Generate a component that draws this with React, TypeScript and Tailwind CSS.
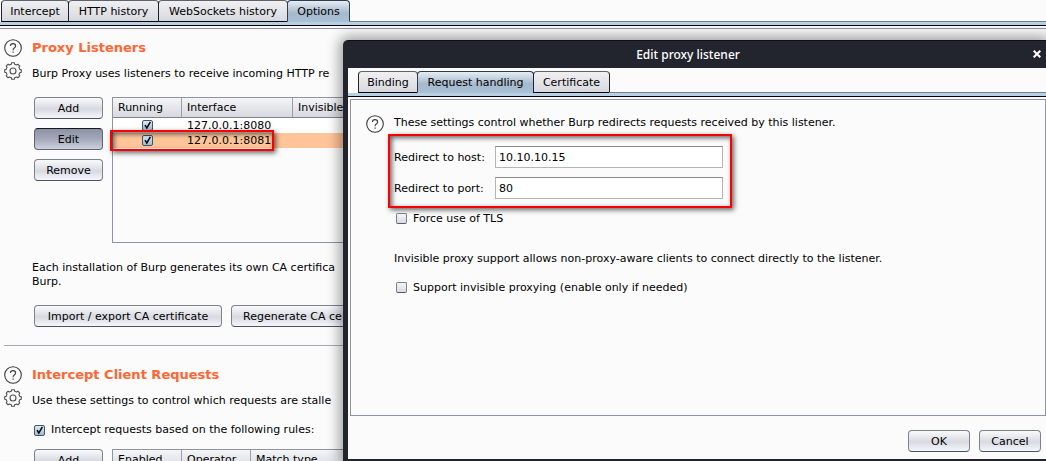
import type { ReactNode } from "react";

const gearPath = (() => {
  const pts: string[] = [];
  const teeth = 8;
  const step = (Math.PI * 2) / teeth;
  for (let i = 0; i < teeth; i++) {
    const a = i * step - Math.PI / 2;
    const at = (angle: number, r: number) =>
      `${(9 + r * Math.cos(angle)).toFixed(2)} ${(9 + r * Math.sin(angle)).toFixed(2)}`;
    pts.push(at(a - step * 0.3, 7), at(a - step * 0.2, 8.4), at(a + step * 0.2, 8.4), at(a + step * 0.3, 7));
  }
  return `M${pts.join("L")}Z`;
})();

function HelpButton() {
  return (
    <button type="button" aria-label="Help" className="block size-[18px] shrink-0">
      <svg viewBox="0 0 18 18" className="size-[18px]" fill="none" stroke="#3c3c3c">
        <circle cx="9" cy="9" r="8.3" strokeWidth="1.1" />
        <path d="M6.4 7.1C6.4 5.5 7.4 4.6 9 4.6s2.6.9 2.6 2.3c0 1.2-.8 1.7-1.5 2.3-.7.6-1 1-1 2" strokeWidth="1.1" />
        <path d="M9.1 12.4v1.4" strokeWidth="1.2" />
      </svg>
    </button>
  );
}

function GearButton() {
  return (
    <button type="button" aria-label="Section options" className="block size-[18px] shrink-0">
      <svg viewBox="0 0 18 18" className="size-[18px]" fill="none" stroke="#505050" strokeWidth="1.1" strokeLinejoin="round">
        <path d={gearPath} />
        <circle cx="9" cy="9" r="3" />
      </svg>
    </button>
  );
}

function Button({ children, pressed = false, className = "" }: { children: ReactNode; pressed?: boolean; className?: string }) {
  const look = pressed
    ? "border-[#5e6475] border-t-[#15171f] bg-linear-to-b from-[#8d93a5] via-[#a3a9b9] to-[#ced2de]"
    : "border-[#7d828c] border-b-[#4d535e] bg-linear-to-b from-[#f6f7f9] from-5% via-[#d8dae1] via-55% to-[#f4f7fd]";
  return (
    <button
      type="button"
      className={`h-[22px] shrink-0 rounded-[4px] border pt-px leading-[19px] whitespace-nowrap ${look} ${className}`}
    >
      {children}
    </button>
  );
}

function Checkbox({ id, label, checked = false }: { id?: string; label?: string; checked?: boolean }) {
  return (
    <span className="relative block size-[11px] shrink-0">
      <input
        id={id}
        type="checkbox"
        aria-label={label}
        defaultChecked={checked}
        className="peer block size-[11px] appearance-none rounded-[2px] border border-[#7a7f8b] border-b-[#565b67] bg-linear-to-b from-[#f3f4f6] to-[#d9dce3] checked:border-[#3c5570] checked:from-[#dfe9f2] checked:to-[#a3bace]"
      />
      <svg viewBox="0 0 11 11" className="pointer-events-none absolute inset-0 hidden size-[11px] peer-checked:block" fill="none" stroke="#0b0b0b" strokeWidth="1.5">
        <path d="M3 5.2L4.8 8L8.4 1.8" />
      </svg>
    </span>
  );
}

type Tab = { name: string; width: string };

const proxyTabs: Tab[] = [
  { name: "Intercept", width: "w-[68px]" },
  { name: "HTTP history", width: "w-[91px]" },
  { name: "WebSockets history", width: "w-[130px]" },
  { name: "Options", width: "w-[63px]" },
];

const dialogTabs: Tab[] = [
  { name: "Binding", width: "w-[60px]" },
  { name: "Request handling", width: "w-[117px]" },
  { name: "Certificate", width: "w-[77px]" },
];

function Tabs({ items, active, className = "" }: { items: Tab[]; active: string; className?: string }) {
  return (
    <div>
      <div role="tablist" className={`flex ${className}`}>
        {items.map(({ name, width }) => (
          <button
            key={name}
            type="button"
            role="tab"
            aria-selected={name === active}
            className={`-mr-px h-[22px] shrink-0 rounded-t-[4px] border pt-px text-center leading-[19px] whitespace-nowrap ${width} ${
              name === active
                ? "border-[#2b3d4f] border-b-[#a9bfd4] bg-linear-to-b from-[#e6edf4] via-[#a5b9cc] via-60% to-[#a9bfd4]"
                : "border-[#20222c] border-t-[#5f636c] border-b-[#050510] bg-linear-to-b from-[#f0f0f3] to-[#d8d9df]"
            }`}
          >
            {name}
          </button>
        ))}
        <div className="mt-auto h-px grow bg-[#6c7f93]" />
      </div>
      <div className="h-[4px] border-b border-[#00000f] bg-[#b9cfe2]" />
    </div>
  );
}

function SectionHead({ title, children }: { title: string; children: ReactNode }) {
  return (
    <div className="flex gap-[10px]">
      <div className="flex flex-col gap-[5px]">
        <HelpButton />
        <GearButton />
      </div>
      <div>
        <h2 className="text-[13px] leading-[18px] font-bold text-[#ff6633]">{title}</h2>
        <p className="mt-[10px] leading-[14px] whitespace-nowrap">{children}</p>
      </div>
    </div>
  );
}

function HeaderCell({ children, className = "" }: { children: ReactNode; className?: string }) {
  return (
    <th className={`h-[20px] border-r border-b border-r-[#9a9ea8] border-b-[#7e8390] p-0 pt-px pl-[5px] text-left leading-[18px] font-normal ${className}`}>
      {children}
    </th>
  );
}

const headGradient = "bg-linear-to-b from-[#f4f5f7] to-[#d6d8de]";

const listeners = [
  { address: "127.0.0.1:8080", selected: false },
  { address: "127.0.0.1:8081", selected: true },
];

function Marker({ className }: { className: string }) {
  return (
    <div
      className={`pointer-events-none absolute border-2 border-[#fb0000] shadow-[2px_2px_5px_rgba(0,0,0,0.6),inset_2px_2px_5px_rgba(0,0,0,0.6)] ${className}`}
    />
  );
}

function ProxyOptions() {
  return (
    <main className="mt-[2px] border-t border-[#8f93a3] pt-[10px] pl-[4px]">
      <section>
        <SectionHead title="Proxy Listeners">Burp Proxy uses listeners to receive incoming HTTP re</SectionHead>
        <div className="mt-[16px] ml-[30px] flex items-start gap-[9px]">
          <div className="flex w-[69px] shrink-0 flex-col gap-[9px]">
            <Button>Add</Button>
            <Button pressed>Edit</Button>
            <Button>Remove</Button>
          </div>
          <div className="relative h-[146px] grow border border-[#8f93a3]">
            <table className="w-full table-fixed border-separate border-spacing-0">
              <thead className={headGradient}>
                <tr>
                  <HeaderCell className="w-[69px]">Running</HeaderCell>
                  <HeaderCell className="w-[111px]">Interface</HeaderCell>
                  <HeaderCell>Invisible</HeaderCell>
                </tr>
              </thead>
              <tbody>
                {listeners.map((l) => (
                  <tr key={l.address} className={l.selected ? "bg-[#ffc599]" : "bg-white"}>
                    <td className="h-[15px] p-0 pl-[29px]">
                      <Checkbox label={`Running ${l.address}`} checked />
                    </td>
                    <td className="h-[15px] p-0 pl-[5px] leading-[15px]">{l.address}</td>
                    <td className="p-0" />
                  </tr>
                ))}
              </tbody>
            </table>
            <Marker className="top-[32px] -left-[3px] h-[21px] w-[164px]" />
          </div>
        </div>
        <p className="mt-[18px] ml-[28px] leading-[14px]">
          Each installation of Burp generates its own CA certifica
          <br />
          Burp.
        </p>
        <div className="mt-[16px] ml-[30px] flex gap-[9px]">
          <Button className="w-[188px]">Import / export CA certificate</Button>
          <Button className="w-[160px] pl-[11px] text-left">Regenerate CA ce</Button>
        </div>
      </section>
      <hr className="mt-[18px] border-[#a7abb8]" />
      <section className="mt-[20px]">
        <SectionHead title="Intercept Client Requests">Use these settings to control which requests are stalle</SectionHead>
        <div className="mt-[15px] ml-[30px] flex items-center gap-[6px]">
          <Checkbox id="intercept-rules" checked />
          <label htmlFor="intercept-rules" className="leading-[14px]">
            Intercept requests based on the following rules:
          </label>
        </div>
        <div className="mt-[12px] ml-[30px] flex items-start gap-[9px]">
          <div className="flex w-[69px] shrink-0 flex-col">
            <Button>Add</Button>
          </div>
          <div className="h-[146px] grow border border-[#8f93a3]">
            <table className="w-full table-fixed border-separate border-spacing-0">
              <thead className={headGradient}>
                <tr>
                  <HeaderCell className="w-[69px]">Enabled</HeaderCell>
                  <HeaderCell className="w-[69px]">Operator</HeaderCell>
                  <HeaderCell>Match type</HeaderCell>
                </tr>
              </thead>
            </table>
          </div>
        </div>
      </section>
    </main>
  );
}

function Field({ id, label, value }: { id: string; label: string; value: string }) {
  return (
    <div className="flex items-center">
      <label htmlFor={id} className="w-[101px] shrink-0 pt-px leading-[20px]">
        {label}
      </label>
      <input
        id={id}
        type="text"
        defaultValue={value}
        className="h-[22px] w-[228px] border border-[#b5b5b5] border-t-[#8a8a8a] bg-white px-[3px] outline-none"
      />
    </div>
  );
}

function EditListenerDialog() {
  return (
    <div
      role="dialog"
      aria-label="Edit proxy listener"
      className="absolute top-10 right-0 bottom-0 left-[343px] flex flex-col rounded-tl-[5px] border-t border-b-2 border-l-[5px] border-[#22252e] border-t-[#0d0e12] bg-[#fbfbfb] shadow-[0_0_14px_3px_rgba(0,0,0,0.4)]"
    >
      <header className="relative flex h-[27px] shrink-0 items-center justify-center bg-[#22252e] pr-[18px] font-['Noto_Sans',sans-serif] text-[12px] font-medium text-white">
        Edit proxy listener
        <button type="button" aria-label="Close" className="absolute top-[9px] right-[5px]">
          <svg viewBox="0 0 8 8" className="size-2" stroke="#fff" strokeWidth="2">
            <path d="M.7.7L7.3 7.3M7.3.7L.7 7.3" />
          </svg>
        </button>
      </header>
      <div className="pt-[3px]">
        <Tabs items={dialogTabs} active="Request handling" className="pl-[10px]" />
      </div>
      <div className="mt-[2px] ml-[2px] flex grow items-start gap-[10px] border border-[#8f93a3] pt-[15px] pl-[15px]">
        <HelpButton />
        <div>
          <p className="pt-px leading-[14px]">These settings control whether Burp redirects requests received by this listener.</p>
          <div className="relative mt-[16px] flex w-fit flex-col gap-[9px]">
            <Field id="redirect-host" label="Redirect to host:" value="10.10.10.15" />
            <Field id="redirect-port" label="Redirect to port:" value="80" />
            <Marker className="-top-[12px] -right-[9px] -bottom-[9px] -left-[6px]" />
          </div>
          <div className="mt-[12px] ml-[2px] flex items-center gap-[6px]">
            <Checkbox id="force-tls" />
            <label htmlFor="force-tls" className="leading-[15px]">
              Force use of TLS
            </label>
          </div>
          <p className="mt-[26px] leading-[14px]">
            Invisible proxy support allows non-proxy-aware clients to connect directly to the listener.
          </p>
          <div className="mt-[14px] ml-[2px] flex items-center gap-[6px]">
            <Checkbox id="invisible" />
            <label htmlFor="invisible" className="leading-[15px]">
              Support invisible proxying (enable only if needed)
            </label>
          </div>
        </div>
      </div>
      <footer className="flex shrink-0 justify-end gap-[9px] pt-[14px] pr-[5px] pb-[7px]">
        <Button className="w-[62px]">OK</Button>
        <Button className="w-[62px]">Cancel</Button>
      </footer>
    </div>
  );
}

export default function App() {
  return (
    <div className="relative h-screen overflow-hidden bg-[#fbfbfb] font-['DejaVu_Sans',sans-serif] text-[11px] text-black">
      <Tabs items={proxyTabs} active="Options" className="pl-px" />
      <ProxyOptions />
      <EditListenerDialog />
    </div>
  );
}
